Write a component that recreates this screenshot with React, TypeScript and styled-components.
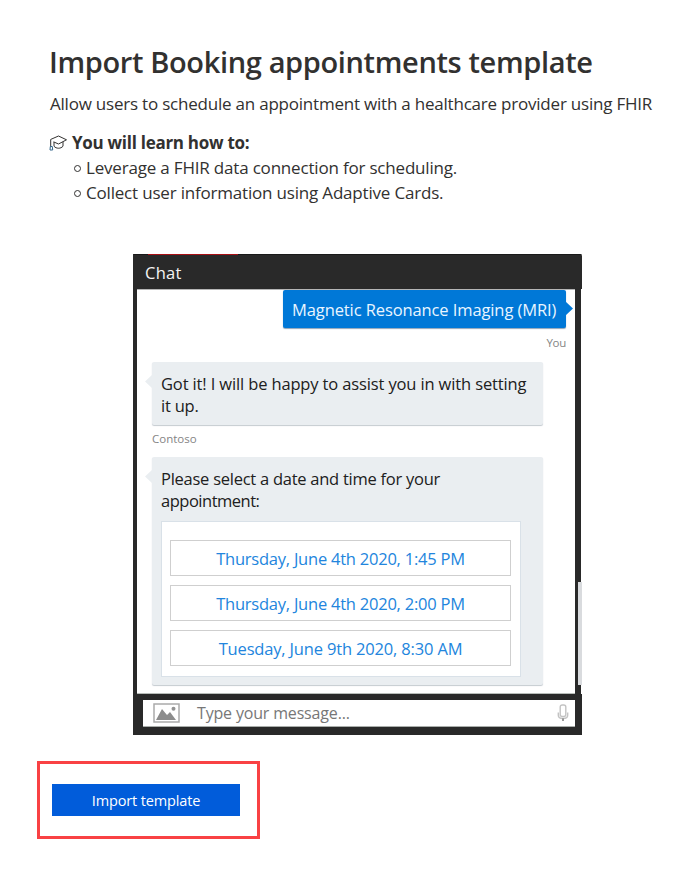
import React from 'react';
import styled, { createGlobalStyle } from 'styled-components';

const GlobalStyle = createGlobalStyle`
  *, *::before, *::after { box-sizing: border-box; }
  body { margin: 0; background: #fff; font-family: "Open Sans", "Noto Sans", sans-serif; color: #323130; }
`;

const Page = styled.main`
  width: 676px;
  height: 873px;
  padding: 42px 0 0 37px;
  overflow: hidden;
  white-space: nowrap;
`;

const Title = styled.h1`
  margin: 0 0 9px 12px;
  font-size: 29px;
  font-weight: 600;
  line-height: 40px;
  letter-spacing: -0.36px;
`;

const Subtitle = styled.p`
  margin: 0 0 13px 13px;
  font-size: 17px;
  line-height: 26px;
  letter-spacing: -0.215px;
`;

const LearnHeading = styled.h2`
  display: flex;
  align-items: center;
  gap: 5px;
  margin: 0 0 0 12px;
  font-size: 17px;
  font-weight: 700;
  line-height: 25px;
  letter-spacing: -0.28px;
`;

const LearnList = styled.ul`
  margin: 0 0 49px 37px;
  padding: 0;
  list-style: none;
`;

const LearnItem = styled.li`
  display: flex;
  align-items: center;
  gap: 5px;
  font-size: 17px;
  line-height: 25px;
  letter-spacing: -0.19px;
  &::before {
    content: "";
    width: 7px;
    height: 7px;
    margin-top: 2px;
    border: 1px solid #323130;
    border-radius: 50%;
  }
`;

const ChatWindow = styled.section`
  display: flex;
  flex-direction: column;
  width: 449px;
  height: 481px;
  margin-left: 96px;
  border-radius: 1px 2px 0 0;
  overflow: hidden;
`;

const ChatHeader = styled.header`
  position: relative;
  height: 35px;
  padding: 5px 0 0 12px;
  background: #292929;
  border-top: 1px solid #191919;
  color: #f4f4f4;
  font-size: 16.5px;
  line-height: 25px;
  letter-spacing: 0.25px;
  &::before {
    content: "";
    position: absolute;
    top: -1px;
    left: 15px;
    width: 90px;
    height: 1px;
    background: #a80f14;
  }
`;

const ChatBody = styled.div`
  display: flex;
  height: 405px;
  border-left: 4px solid #292929;
`;

const Messages = styled.div`
  flex: 1;
  display: flex;
  flex-direction: column;
  align-items: flex-start;
  padding: 0 0 0 15px;
  border-top: 1px solid #b5b5b5;
  border-bottom: 1px solid #b8bdb9;
`;

const Rail = styled.div`
  display: flex;
  align-items: flex-start;
  justify-content: flex-end;
  width: 7px;
  padding-top: 293px;
  background: linear-gradient(90deg, #292929 6px, #fff 6px);
`;

const Thumb = styled.div`
  width: 4px;
  height: 103px;
  background: #d9dbde;
`;

const Bubble = styled.div<{ $mine?: boolean; $height: number }>`
  position: relative;
  align-self: ${p => (p.$mine ? 'flex-end' : 'flex-start')};
  width: ${p => (p.$mine ? 283 : 391)}px;
  height: ${p => p.$height}px;
  margin-right: ${p => (p.$mine ? 9 : 0)}px;
  padding: ${p => (p.$mine ? '8px 0 0 9px' : '10px 9px 0')};
  border-radius: 2px;
  background: ${p => (p.$mine ? '#0078d7' : '#eaeef1')};
  box-shadow: 0 1px 1px ${p => (p.$mine ? '#8ea4b8' : '#c5cbd0')};
  color: ${p => (p.$mine ? '#e9f5ff' : '#202020')};
  font-size: 16.5px;
  line-height: 23px;
  &::after {
    content: "";
    position: absolute;
    top: ${p => (p.$mine ? 11 : 12)}px;
    ${p => (p.$mine ? 'right' : 'left')}: -7px;
    width: 8px;
    height: 15px;
    background: inherit;
    clip-path: ${p => (p.$mine ? 'polygon(0 0, 100% 50%, 0 100%)' : 'polygon(100% 0, 0 50%, 100% 100%)')};
  }
`;

const Line = styled.div<{ $track: number }>`
  letter-spacing: ${p => p.$track}px;
  & + & { margin-top: -1px; }
`;

const Sender = styled.div<{ $mine?: boolean }>`
  align-self: ${p => (p.$mine ? 'flex-end' : 'flex-start')};
  height: ${p => (p.$mine ? 34 : 32)}px;
  padding-top: ${p => (p.$mine ? 6 : 5)}px;
  margin-right: ${p => (p.$mine ? 9 : 0)}px;
  color: #858585;
  font-size: 11.5px;
  line-height: 17px;
  letter-spacing: ${p => (p.$mine ? -0.3 : 0)}px;
`;

const Card = styled.div`
  display: flex;
  flex-direction: column;
  gap: 9px;
  width: 360px;
  height: 156px;
  margin-top: 9px;
  padding: 18px 9px 0 8px;
  border: 1px solid #d9e1e8;
  background: #fff;
`;

const SlotButton = styled.button<{ $track: number }>`
  width: 341px;
  height: 36px;
  padding: 1px 0 0;
  border: 1px solid #cfcfcf;
  background: #fff;
  color: #2285dd;
  font: 16.5px/23px "Open Sans", "Noto Sans", sans-serif;
  letter-spacing: ${p => p.$track}px;
`;

const ChatFooter = styled.footer`
  height: 41px;
  padding: 6px 7px 8px 10px;
  background: #292929;
`;

const InputBar = styled.div`
  display: flex;
  align-items: center;
  height: 27px;
  padding: 0 6px 0 10px;
  border-bottom: 1px solid #a9adaa;
  background: #fff;
`;

const Placeholder = styled.span`
  flex: 1;
  margin-left: 17px;
  color: #777;
  font-size: 16px;
  line-height: 24px;
  letter-spacing: -0.17px;
`;

const Callout = styled.div`
  width: 223px;
  height: 78px;
  margin-top: 26px;
  padding: 20px 12px;
  border: 3px solid #f94144;
`;

const ImportButton = styled.button`
  display: block;
  width: 188px;
  height: 32px;
  padding: 2px 0 0;
  border: 0;
  background: #015cda;
  color: #fff;
  font: 14.5px/22px "Open Sans", "Noto Sans", sans-serif;
  letter-spacing: -0.137px;
`;

const CapIcon = () => (
  <svg width="18" height="16" viewBox="0 0 18 16" fill="none" stroke="#323130" strokeWidth="1">
    <path d="M1.5 4.5 9.5 1l8 3.8-8 4.2-5-2.2M5 7v4.2c2.2 2.7 6.8 2.7 9 0V6.8M1.7 4.7v7" />
    <path d="M1.3 11.5h2l.4 3.5H1z" stroke="#35678b" />
  </svg>
);

const PictureIcon = () => (
  <svg width="27" height="20" viewBox="0 0 27 20">
    <rect x="1" y="1" width="25" height="18" fill="#fff" stroke="#aaa" strokeWidth="1.5" />
    <path d="M3 17 9 6l5 6 3-3 6 8z" fill="#8c8c8c" />
    <circle cx="20.5" cy="5.8" r="2" fill="#929292" />
  </svg>
);

const MicIcon = () => (
  <svg width="12" height="18" viewBox="0 0 12 18" fill="none" stroke="#c3c3c3" strokeWidth="1.4">
    <rect x="3.2" y="1" width="5.6" height="11.5" rx="2" />
    <path d="M1.3 8.5v2.8c0 2 1.8 3.2 4.7 3.2s4.7-1.2 4.7-3.2V8.5" />
    <path d="M6 14.3V17" stroke="#999" strokeWidth="2" />
  </svg>
);

const slots = [
  { label: 'Thursday, June 4th 2020, 1:45 PM', track: -0.229 },
  { label: 'Thursday, June 4th 2020, 2:00 PM', track: -0.229 },
  { label: 'Tuesday, June 9th 2020, 8:30 AM', track: -0.167 },
];

export default function App() {
  return (
    <>
      <GlobalStyle />
      <Page>
        <Title>Import Booking appointments template</Title>
        <Subtitle>Allow users to schedule an appointment with a healthcare provider using FHIR</Subtitle>
        <LearnHeading><CapIcon />You will learn how to:</LearnHeading>
        <LearnList>
          <LearnItem>Leverage a FHIR data connection for scheduling.</LearnItem>
          <LearnItem>Collect user information using Adaptive Cards.</LearnItem>
        </LearnList>
        <ChatWindow>
          <ChatHeader>Chat</ChatHeader>
          <ChatBody>
            <Messages>
              <Bubble $mine $height={38}>
                <Line $track={-0.104}>Magnetic Resonance Imaging (MRI)</Line>
              </Bubble>
              <Sender $mine>You</Sender>
              <Bubble $height={63}>
                <Line $track={-0.138}>Got it! I will be happy to assist you in with setting</Line>
                <Line $track={-0.209}>it up.</Line>
              </Bubble>
              <Sender>Contoso</Sender>
              <Bubble $height={228}>
                <Line $track={-0.259}>Please select a date and time for your</Line>
                <Line $track={-0.49}>appointment:</Line>
                <Card>
                  {slots.map(s => (
                    <SlotButton key={s.label} $track={s.track}>{s.label}</SlotButton>
                  ))}
                </Card>
              </Bubble>
            </Messages>
            <Rail><Thumb /></Rail>
          </ChatBody>
          <ChatFooter>
            <InputBar>
              <PictureIcon />
              <Placeholder>Type your message...</Placeholder>
              <MicIcon />
            </InputBar>
          </ChatFooter>
        </ChatWindow>
        <Callout>
          <ImportButton>Import template</ImportButton>
        </Callout>
      </Page>
    </>
  );
}
